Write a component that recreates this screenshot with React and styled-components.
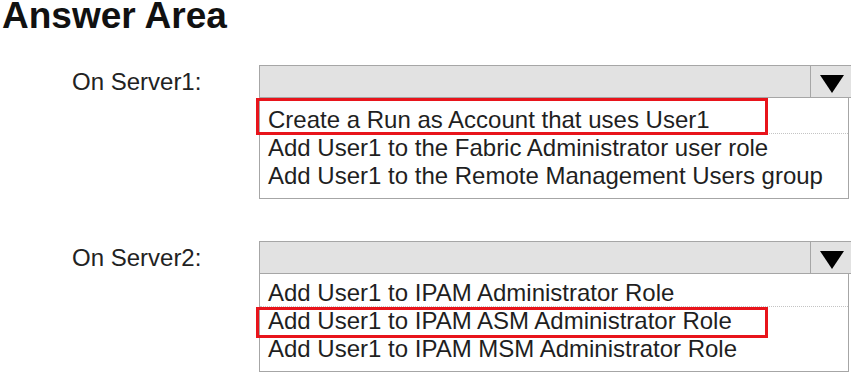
import styled, { createGlobalStyle } from "styled-components";

const GlobalStyle = createGlobalStyle`
  body {
    margin: 0;
    background: #fff;
    overflow: hidden;
    font-family: "Liberation Sans", Arial, sans-serif;
    color: #1f1f1f;
  }
`;

const Page = styled.div`
  width: 851px;
  height: 375px;
  overflow: hidden;
`;

const Title = styled.h1`
  margin: 0 0 0 2px;
  height: 33px;
  font-size: 37px;
  line-height: 32px;
  font-weight: bold;
  color: #111;
`;

const Question = styled.div`
  display: flex;
  margin-top: ${(p) => p.$gap}px;
`;

const Label = styled.div`
  width: 259px;
  flex: none;
  box-sizing: border-box;
  padding-left: 72px;
  height: 33px;
  line-height: 33px;
  font-size: 24px;
  color: #222;
`;

const Dropdown = styled.div`
  flex: none;
  width: 594px;
`;

const Header = styled.div`
  height: 33px;
  box-sizing: border-box;
  border: 1px solid #a6a6a6;
  background: #e2e2e2;
  display: flex;
  justify-content: flex-end;
`;

const ArrowCell = styled.div`
  width: 42px;
  border-left: 1px solid #a6a6a6;
  display: flex;
  align-items: center;
  justify-content: center;
  padding-top: 4px;
  box-sizing: border-box;
`;

const Options = styled.div`
  width: 590px;
  box-sizing: border-box;
  border: 1px solid #a6a6a6;
  border-top: none;
  padding: ${(p) => p.$padTop}px 0 8px;
  background: #fff;
`;

const Option = styled.div`
  position: relative;
  height: 28px;
  line-height: 28px;
  box-sizing: border-box;
  padding-left: 8px;
  font-size: 24px;
  white-space: nowrap;
  color: #1f1f1f;

  &:first-child {
    border-bottom: 1px dotted #c4c4c4;
  }
`;

const Highlight = styled.span`
  position: absolute;
  left: -4px;
  top: ${(p) => p.$top}px;
  width: 512px;
  height: ${(p) => p.$height}px;
  box-sizing: border-box;
  border: 3px solid #e8141b;
  pointer-events: none;
`;

function Arrow() {
  return (
    <svg width="24" height="18" viewBox="0 0 24 18">
      <polygon points="0,0 24,0 12,18" fill="#000" />
    </svg>
  );
}

const questions = [
  {
    label: "On Server1:",
    gap: 32,
    padTop: 8,
    selected: 0,
    box: { top: -8, height: 37 },
    options: [
      "Create a Run as Account that uses User1",
      "Add User1 to the Fabric Administrator user role",
      "Add User1 to the Remote Management Users group",
    ],
  },
  {
    label: "On Server2:",
    gap: 42,
    padTop: 5,
    selected: 1,
    box: { top: 0, height: 31 },
    options: [
      "Add User1 to IPAM Administrator Role",
      "Add User1 to IPAM ASM Administrator Role",
      "Add User1 to IPAM MSM Administrator Role",
    ],
  },
];

export default function App() {
  return (
    <Page>
      <GlobalStyle />
      <Title>Answer Area</Title>
      {questions.map((q) => (
        <Question key={q.label} $gap={q.gap}>
          <Label>{q.label}</Label>
          <Dropdown>
            <Header>
              <ArrowCell>
                <Arrow />
              </ArrowCell>
            </Header>
            <Options $padTop={q.padTop}>
              {q.options.map((text, i) => (
                <Option key={text}>
                  {text}
                  {i === q.selected && (
                    <Highlight $top={q.box.top} $height={q.box.height} />
                  )}
                </Option>
              ))}
            </Options>
          </Dropdown>
        </Question>
      ))}
    </Page>
  );
}
